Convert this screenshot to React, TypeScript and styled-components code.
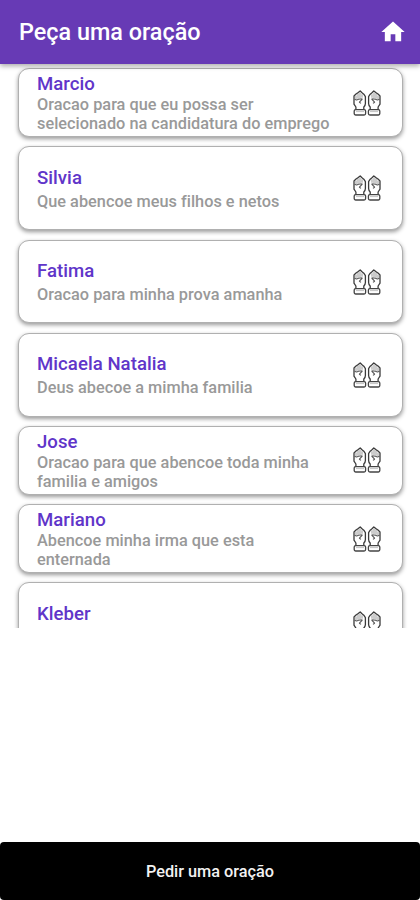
import React from "react";
import styled, { createGlobalStyle } from "styled-components";

const GlobalStyle = createGlobalStyle`
  * { box-sizing: border-box; }
  html, body, #root { margin: 0; height: 100%; }
  body { background: #fff; font-family: Roboto, sans-serif; }
`;

const Screen = styled.div`
  display: flex;
  flex-direction: column;
  width: 420px;
  height: 900px;
  overflow: hidden;
  background: #fff;
`;

const AppBar = styled.header`
  flex: none;
  display: flex;
  align-items: center;
  justify-content: space-between;
  height: 64px;
  padding: 0 13px 1px 19px;
  background: #673ab5;
  box-shadow: 0 2px 5px rgba(0, 0, 0, 0.34);
  z-index: 1;
`;

const Title = styled.h1`
  margin: 0;
  padding-top: 1px;
  color: #fff;
  font-size: 23.4px;
  font-weight: 500;
  line-height: 28px;
  white-space: nowrap;
`;

const HomeButton = styled.button`
  display: flex;
  padding: 0;
  border: 0;
  background: none;
  color: #fff;
`;

const List = styled.main`
  flex: none;
  display: flex;
  flex-direction: column;
  gap: 9.6px;
  height: 563.5px;
  padding: 4.3px 17px 0 18px;
  overflow: hidden;
`;

const Card = styled.article<{ $tall?: boolean }>`
  flex: none;
  display: flex;
  justify-content: space-between;
  align-items: center;
  height: ${(p) => (p.$tall ? 83.7 : 68.5)}px;
  padding: 0 21px 0 18px;
  border: 1px solid #b0b0b0;
  border-radius: 11px;
  background: #fff;
  box-shadow: 0 2px 4px rgba(0, 0, 0, 0.4);
`;

const Texts = styled.div<{ $tall?: boolean }>`
  display: flex;
  flex-direction: column;
  gap: ${(p) => (p.$tall ? 5 : 2)}px;
  padding-top: ${(p) => (p.$tall ? 2.7 : 2.4)}px;
`;

const Name = styled.h2`
  margin: 0;
  color: #6035c9;
  font-size: 18.6px;
  font-weight: 500;
  line-height: 20px;
  letter-spacing: 0.04px;
`;

const Request = styled.p`
  margin: 0;
  color: #999;
  font-size: 16.3px;
  font-weight: 500;
  line-height: 18.7px;
  letter-spacing: 0.02px;
  white-space: pre;
`;

const Footer = styled.footer`
  margin-top: auto;
`;

const AskButton = styled.button`
  display: block;
  width: 100%;
  height: 58px;
  padding: 2px 0 0;
  border: 0;
  border-radius: 4px;
  background: #000;
  color: #f2f2f2;
  font: 500 16.3px/20px Roboto, sans-serif;
`;

function HomeIcon() {
  return (
    <svg width="28" height="28" viewBox="0 0 24 24" fill="currentColor">
      <path d="M10 20v-6h4v6h5v-8h3L12 3 2 12h3v8z" />
    </svg>
  );
}

const Hand = () => (
  <>
    <path
      d="M1 6V14.2L2.9 17V19.6H10.8V17Q12.4 15.6 12.4 13.6V6.6L10.8 4.2 9 2.8 7.2.9 5.2 2.6 3 4Z"
      fill="#fff"
      stroke="#3b3b3b"
      strokeWidth="1.3"
    />
    <path d="M3 5.4V9M5 3.8V8.8M7 2.5V8.4M9 4.2V7.8" stroke="#aaa" strokeWidth="1.2" />
    <path d="M1.4 9.2 3.6 10 5.6 9.2 9.4 8.8M9.4 9 6.4 12.2 8 13.4" stroke="#5a5a5a" strokeWidth="1.1" />
    <rect x="1.2" y="19.6" width="11.4" height="5.4" rx="1.5" fill="#fff" stroke="#444" strokeWidth="1.3" />
    <path d="M3 21.6H11" stroke="#bbb" strokeWidth="0.9" />
  </>
);

function HandsIcon() {
  return (
    <svg width="28" height="26" viewBox="0 0 28 26" fill="none" strokeLinejoin="round">
      <Hand />
      <g transform="translate(28 0) scale(-1 1)">
        <Hand />
      </g>
    </svg>
  );
}

const requests = [
  { name: "Marcio", text: "Oracao para que eu possa ser\nselecionado na candidatura do emprego" },
  { name: "Silvia", text: "Que abencoe meus filhos e netos", tall: true },
  { name: "Fatima", text: "Oracao para minha prova amanha", tall: true },
  { name: "Micaela Natalia", text: "Deus abecoe a mimha familia", tall: true },
  { name: "Jose", text: "Oracao para que abencoe toda minha\nfamilia e amigos" },
  { name: "Mariano", text: "Abencoe minha irma que esta\nenternada" },
  { name: "Kleber", text: " ", tall: true },
];

export default function App() {
  return (
    <>
      <GlobalStyle />
      <Screen>
        <AppBar>
          <Title>Peça uma oração</Title>
          <HomeButton aria-label="Início">
            <HomeIcon />
          </HomeButton>
        </AppBar>
        <List>
          {requests.map((r) => (
            <Card key={r.name} $tall={r.tall}>
              <Texts $tall={r.tall}>
                <Name>{r.name}</Name>
                <Request>{r.text}</Request>
              </Texts>
              <HandsIcon />
            </Card>
          ))}
        </List>
        <Footer>
          <AskButton>Pedir uma oração</AskButton>
        </Footer>
      </Screen>
    </>
  );
}
